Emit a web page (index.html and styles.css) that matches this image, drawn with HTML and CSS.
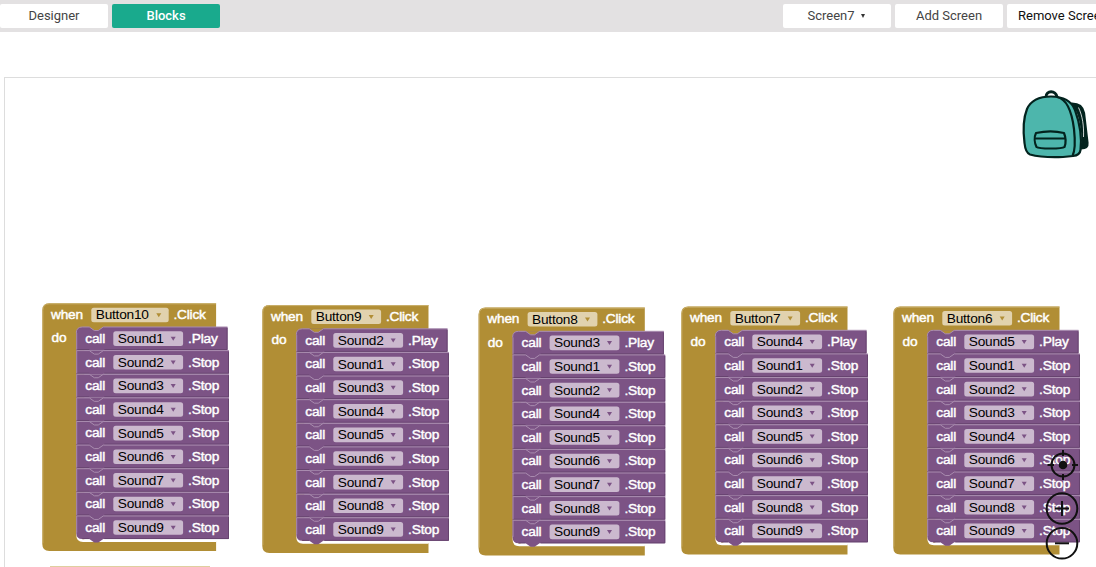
FILE: index.html
```html
<!DOCTYPE html>
<html lang="en">
<head>
<meta charset="utf-8">
<title>Blocks editor</title>
<link rel="stylesheet" href="styles.css">
</head>
<body>
<header class="toolbar">
  <nav class="group">
    <button class="btn">Designer</button>
    <button class="btn btn-active">Blocks</button>
  </nav>
  <nav class="group group-screens">
    <button class="btn">Screen7<span class="caret"></span></button>
    <button class="btn">Add Screen</button>
    <button class="btn btn-remove">Remove Screen</button>
  </nav>
</header>
<main class="workspace">
  <svg class="canvas" width="1092" height="490" viewBox="4 77 1092 490">
    <g id="blocks"></g>
    <path class="next-block" d="M50 567H210"/>
    <g class="backpack">
      <path class="strap" d="M1072 103.500C1079 103.500 1083 107 1084 113L1087.500 143C1088 147 1086 148 1081 148.500L1082.500 142C1083 131 1080 115 1076 109Z"/>
      <path class="loop" d="M1046 97C1046 90 1056 90 1057 97"/>
      <path class="bag" d="M1051 96.500C1062 96.500 1071 100 1075 110C1079 121 1082 137 1080.500 150C1080 154 1077 155.500 1073 156L1063 157C1051 157.500 1039 157 1030 154.500C1026 153 1025 148 1024.500 143C1023 131 1023 119 1027 109C1031 100 1040 96.500 1051 96.500Z"/>
      <path class="seam" d="M1057 97C1067 99 1072 113 1074 129C1075.500 143 1075 151 1072.500 156"/>
      <path class="strap-gap" d="M1078.500 107.500C1082.500 116 1084 126 1083.500 137"/>
      <path class="pocket" d="M1036 133C1045 131 1056 131 1064 133C1066 138 1066 143 1064.500 147C1062 149 1039 149 1036.500 147C1034.500 143 1034 137 1036 133ZM1035.500 138.500H1065"/>
    </g>
    <g class="controls">
      <circle cx="1063" cy="465" r="11.500"/>
      <path d="M1063 450V456M1063 474V480M1047.500 465H1054M1072 465H1078"/>
      <circle class="dot" cx="1063" cy="465" r="4.300"/>
      <circle cx="1062" cy="508.500" r="15.300"/>
      <path d="M1062 501V516M1055 508.500H1069"/>
      <circle cx="1062" cy="543.300" r="15.300"/>
      <path d="M1055 543.300H1069"/>
    </g>
  </svg>
</main>
<script src="script.js"></script>
</body>
</html>
```

FILE: styles.css
```css
body {
  margin: 0;
  height: 567px;
  overflow: hidden;
  background: #fff;
  font-family: Roboto, sans-serif;
}
.toolbar {
  display: flex;
  justify-content: space-between;
  box-sizing: border-box;
  height: 32px;
  padding: 4px 0 4px;
  background: #e3e1e2;
}
.group {
  display: flex;
  gap: 4px;
}
.group-screens {
  width: 313px;
}
.btn {
  flex: none;
  width: 108px;
  height: 24px;
  padding: 0;
  border: 0;
  border-radius: 2px;
  background: #fff;
  color: #444;
  font: 13px/24px Roboto, sans-serif;
  white-space: nowrap;
}
.btn-active {
  background: #19aa8d;
  color: #fff;
  font-weight: 500;
}
.btn-remove {
  padding-left: 11px;
  color: #111;
  text-align: left;
}
.caret {
  display: inline-block;
  margin: 0 2px 2px 6px;
  border: 2.5px solid transparent;
  border-top: 4px solid #333;
  border-bottom: 0;
}
.workspace {
  box-sizing: border-box;
  margin: 45px 0 0 4px;
  width: 1092px;
  height: 490px;
  border-top: 1px solid #ddd;
  border-left: 1px solid #ddd;
}
.canvas {
  display: block;
  margin: -1px 0 0 -1px;
}
.canvas text {
  font: 13.7px "Liberation Sans", sans-serif;
  letter-spacing: -0.24px;
}
.canvas .label {
  fill: #fff;
  stroke: #fff;
  stroke-width: 0.45px;
  letter-spacing: -0.2px;
}
.value {
  fill: #000;
}
.event-body { fill: #b18e35; }
.event-edge { fill: none; stroke: #cbb26f; }
.event-inner { fill: #fff; }
.event-field { fill: #e1d2ae; }
.event-arrow { fill: #b18e35; }
.event-notch { fill: #b18e35; }
.call-body { fill: #7c5385; }
.call-edge { fill: none; stroke: #a98caf; }
.call-shade { fill: none; stroke: #67446f; }
.call-field { fill: #cbb9ce; }
.call-arrow { fill: #7c5385; }
.next-block { stroke: #dfcf9f; stroke-width: 2px; }
.backpack path {
  fill: #4db6ac;
  stroke: #03231e;
  stroke-width: 2.2px;
  stroke-linejoin: round;
}
.backpack .strap { fill: #03231e; }
.backpack .strap-gap { fill: none; stroke: #fff; stroke-width: 0.8px; }
.backpack .loop { fill: none; stroke-width: 3px; }
.backpack .seam { fill: none; }
.controls {
  fill: none;
  stroke: #111;
  stroke-width: 2px;
}
.controls .dot { fill: #111; stroke: none; }
```

FILE: script.js
```js
const ROW = 23.62;
const events = [
  { x: 42.3, y: 303.3, name: "Button10", first: 1 },
  { x: 262.3, y: 305.1, name: "Button9", first: 2 },
  { x: 478.6, y: 307.6, name: "Button8", first: 3 },
  { x: 681.3, y: 306.6, name: "Button7", first: 4 },
  { x: 893.3, y: 306.6, name: "Button6", first: 5 }
];

function field(kind, x, y, width, text) {
  const a = x + width - 12.4;
  return `<rect class="${kind}-field" x="${x}" y="${y}" width="${width}" height="14.6" rx="2.500"/>
    <text class="value" x="${x + 4.5}" y="${y + 11.8}">${text}</text>
    <path class="${kind}-arrow" d="M${a} ${y + 5.5}h5l-2.500 4z"/>`;
}

function callRow(index, sound, method) {
  const y = 23.7 + index * ROW;
  const right = method === "Play" ? 185.2 : 186.6;
  const start = index ? `M34 ${y}` : `M34 ${y + 6}q0 -6 6 -6`;
  const notch = `H47l5 3.500h4l5 -3.500H${right}`;
  const last = index === 8;
  const bottom = last
    ? `v${ROW - 0.6}H61l-5 3.500h-4l-5 -3.500H40q-6 0 -6 -6`
    : `v${ROW}H34`;
  const cut = index ? "" : `<path class="event-notch" d="M47 ${y}l5 3.500h4l5 -3.500z"/>`;
  return `<path class="call-body" d="${start}H${right}${bottom}z"/>${cut}
    <path class="call-shade" d="M${right - 0.4} ${y + 1}v${ROW - 2}H62M47 ${y + ROW - 1}H${last ? 40 : 34.5}"/>
    <path class="call-edge" d="${start}${notch}M34.400 ${y + (index ? 0 : 6)}V${y + ROW - (last ? 7 : 1)}"/>
    <text class="label" x="43" y="${y + 16}">call</text>
    ${field("call", 71, y + 4.3, 69.8, "Sound" + sound)}
    <text class="label" x="145.800" y="${y + 16}">.${method}</text>`;
}

function eventBlock({ x, y, name, first }) {
  const fieldWidth = name.length === 8 ? 77.4 : 69.8;
  const right = 96.4 + fieldWidth;
  const order = [first];
  for (let n = 1; n <= 9; n++) if (n !== first) order.push(n);
  return `<g transform="translate(${x} ${y})">
    <path class="event-body" d="M0 7q0 -7 7 -7H${right}V24H42V238H${right}V247.800H7q-7 0 -7 -7z"/>
    <path class="event-edge" d="M.5 240V7q0 -6.500 6.500 -6.500H${right}"/>
    <path class="event-inner" d="M34 228V232q0 6.700 6.700 6.700H${right}V236H40z"/>
    <text class="label" x="8.700" y="15.900">when</text>
    ${field("event", 49, 4.4, fieldWidth, name)}
    <text class="label" x="${fieldWidth + 53.8}" y="15.900">.Click</text>
    <text class="label" x="9.200" y="39.100">do</text>
    ${order.map((n, i) => callRow(i, n, i ? "Stop" : "Play")).join("")}
  </g>`;
}

document.getElementById("blocks").innerHTML = events.map(eventBlock).join("");
```
